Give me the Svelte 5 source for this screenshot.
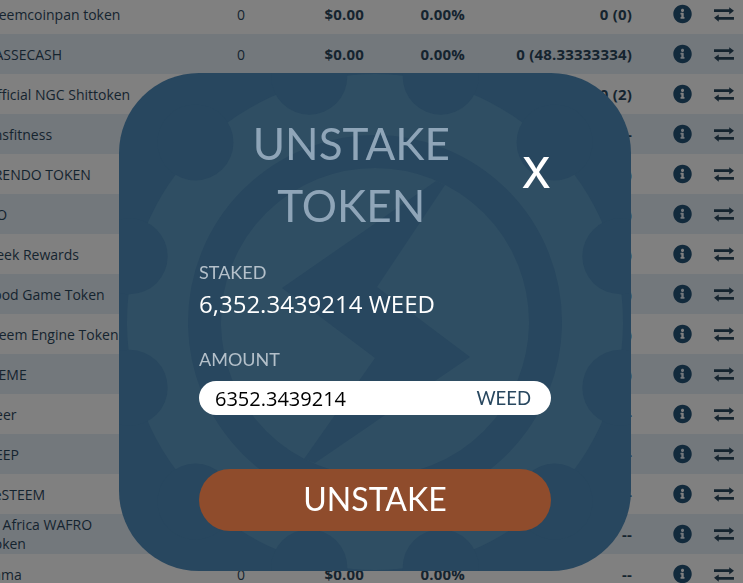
<script>
  const rows = [
    { name: "Steemcoinpan token", count: "0", price: "$0.00", change: "0.00%", staked: "0 (0)" },
    { name: "PASSECASH", count: "0", price: "$0.00", change: "0.00%", staked: "0 (48.33333334)" },
    { name: "Official NGC Shittoken", count: "0", price: "$0.00", change: "0.00%", staked: "0 (2)" },
    { name: "Ensfitness", count: "0", price: "$0.00", change: "0.00%", staked: "--" },
    { name: "TRENDO TOKEN", count: "0", price: "$0.00", change: "0.00%", staked: "0 (0)" },
    { name: "GO", count: "0", price: "$0.00", change: "0.00%", staked: "0 (0)" },
    { name: "Geek Rewards", count: "0", price: "$0.00", change: "0.00%", staked: "0 (0)" },
    { name: "Food Game Token", count: "0", price: "$0.00", change: "0.00%", staked: "0 (0)" },
    { name: "Steem Engine Token", count: "0", price: "$0.00", change: "0.00%", staked: "0 (0)" },
    { name: "MEME", count: "0", price: "$0.00", change: "0.00%", staked: "0 (0)" },
    { name: "Beer", count: "0", price: "$0.00", change: "0.00%", staked: "--" },
    { name: "BEEP", count: "0", price: "$0.00", change: "0.00%", staked: "--" },
    { name: "SeSTEEM", count: "0", price: "$0.00", change: "0.00%", staked: "--" },
    { name: "W Africa WAFRO Token", count: "0", price: "$0.00", change: "0.00%", staked: "--" },
    { name: "Lama", count: "0", price: "$0.00", change: "0.00%", staked: "--" },
  ];

  // gear notches, page coordinates
  const notches = Array.from({ length: 12 }, (_, i) => {
    const a = ((15 + i * 30) * Math.PI) / 180;
    return { x: 375 + 254 * Math.cos(a), y: 322 + 254 * Math.sin(a) };
  });
</script>

<div class="table">
  {#each rows as row, i}
    <div class="row" class:alt={i % 2 === 1}>
      <div class="name">{row.name}</div>
      <div class="count">{row.count}</div>
      <div class="num price">{row.price}</div>
      <div class="num change">{row.change}</div>
      <div class="num staked">{row.staked}</div>
      <div class="actions">
        <svg class="info" viewBox="0 0 512 512">
          <path d="M256 8C119.043 8 8 119.083 8 256c0 136.997 111.043 248 248 248s248-111.003 248-248C504 119.083 392.957 8 256 8zm0 110c23.196 0 42 18.804 42 42s-18.804 42-42 42-42-18.804-42-42 18.804-42 42-42zm56 254c0 6.627-5.373 12-12 12h-88c-6.627 0-12-5.373-12-12v-24c0-6.627 5.373-12 12-12h12v-64h-12c-6.627 0-12-5.373-12-12v-24c0-6.627 5.373-12 12-12h64c6.627 0 12 5.373 12 12v100h12c6.627 0 12 5.373 12 12v24z" />
        </svg>
        <svg class="swap" viewBox="0 0 21 15">
          <path d="M0 2h16V0l5 3.500-5 4V5H0zM21 10H5V7.500L0 11l5 4v-2h16z" />
        </svg>
      </div>
    </div>
  {/each}
</div>

<div class="modal">
  <svg class="gear" viewBox="119 73 512 498">
    <circle cx="375" cy="322" r="248" fill="#2f4e63" />
    {#each notches as n}
      <circle cx={n.x} cy={n.y} r="38" fill="#28475f" />
    {/each}
    <circle cx="375" cy="322" r="170.500" fill="none" stroke="#28475f" stroke-width="33" />
    <polygon points="436,181 445,185 377,287 470,357 315,463 304,459 375,358 282,288" fill="#28475f" />
  </svg>

  <div class="content">
    <div class="head">
      <h1>UNSTAKE TOKEN</h1>
      <span class="close">X</span>
    </div>
    <div class="label">STAKED</div>
    <div class="value">6,352.3439214 WEED</div>
    <div class="label amount">AMOUNT</div>
    <div class="input">
      <span class="qty">6352.3439214</span>
      <span class="unit">WEED</span>
    </div>
    <button>UNSTAKE</button>
  </div>
</div>

<style>
  :global(body) {
    background: #808080;
    overflow: hidden;
  }

  .table {
    margin: -6px 0 0 -14px;
    font-family: "Open Sans", sans-serif;
    font-size: 14px;
    color: #15242f;
  }

  .row {
    display: grid;
    grid-template-columns: 193px 124px 61px 101px 167px 102px;
    align-items: center;
    height: 40px;
    background: #808080;
  }
  .row.alt {
    background: #73787c;
  }

  .name {
    padding-right: 47px;
    line-height: 19px;
  }
  .count {
    text-align: center;
  }
  .num {
    text-align: right;
    white-space: nowrap;
    font-size: 15px;
    font-weight: 700;
    letter-spacing: 0.2px;
  }

  .actions {
    display: flex;
    align-items: center;
    gap: 22px;
    padding-left: 41px;
  }
  .info {
    width: 20px;
    height: 20px;
    fill: #122a3c;
  }
  .swap {
    width: 21px;
    height: 15px;
    fill: #15242f;
  }

  .modal {
    position: fixed;
    left: 119px;
    top: 73px;
    width: 512px;
    height: 498px;
    border-radius: 80px;
    background: #28475f;
    overflow: hidden;
    font-family: "Lato", sans-serif;
  }
  .gear {
    position: absolute;
    inset: 0;
    width: 512px;
    height: 498px;
  }

  .content {
    position: relative;
    display: flex;
    flex-direction: column;
    padding: 39px 80px 0;
  }

  .head {
    display: flex;
    align-items: center;
    margin-bottom: 24px;
  }
  h1 {
    width: 308px;
    margin: 0;
    font-size: 44px;
    font-weight: 400;
    line-height: 62px;
    text-align: center;
    color: #8fa5b8;
  }
  .close {
    margin-left: 18px;
    margin-top: -3px;
    font-family: "Inter", sans-serif;
    font-size: 42px;
    font-weight: 500;
    line-height: 1;
    color: #fff;
  }

  .label {
    font-size: 18px;
    line-height: 24px;
    color: #b4c0ca;
  }
  .label.amount {
    margin-top: 27px;
  }
  .value {
    margin-top: 4px;
    font-family: "Open Sans", sans-serif;
    font-size: 24px;
    line-height: 32px;
    color: #fff;
  }

  .input {
    display: flex;
    justify-content: space-between;
    align-items: center;
    height: 34px;
    margin-top: 10px;
    padding: 0 20px 0 16px;
    border-radius: 17px;
    background: #fff;
  }
  .qty {
    font-family: "Open Sans", sans-serif;
    font-size: 20px;
    color: #000;
  }
  .unit {
    font-size: 18.500px;
    color: #28475f;
  }

  button {
    height: 62px;
    margin-top: 54px;
    padding: 0 0 4px;
    border: 0;
    border-radius: 31px;
    background: #8f4c2c;
    font-family: "Lato", sans-serif;
    font-size: 32px;
    color: #fff;
  }
</style>
